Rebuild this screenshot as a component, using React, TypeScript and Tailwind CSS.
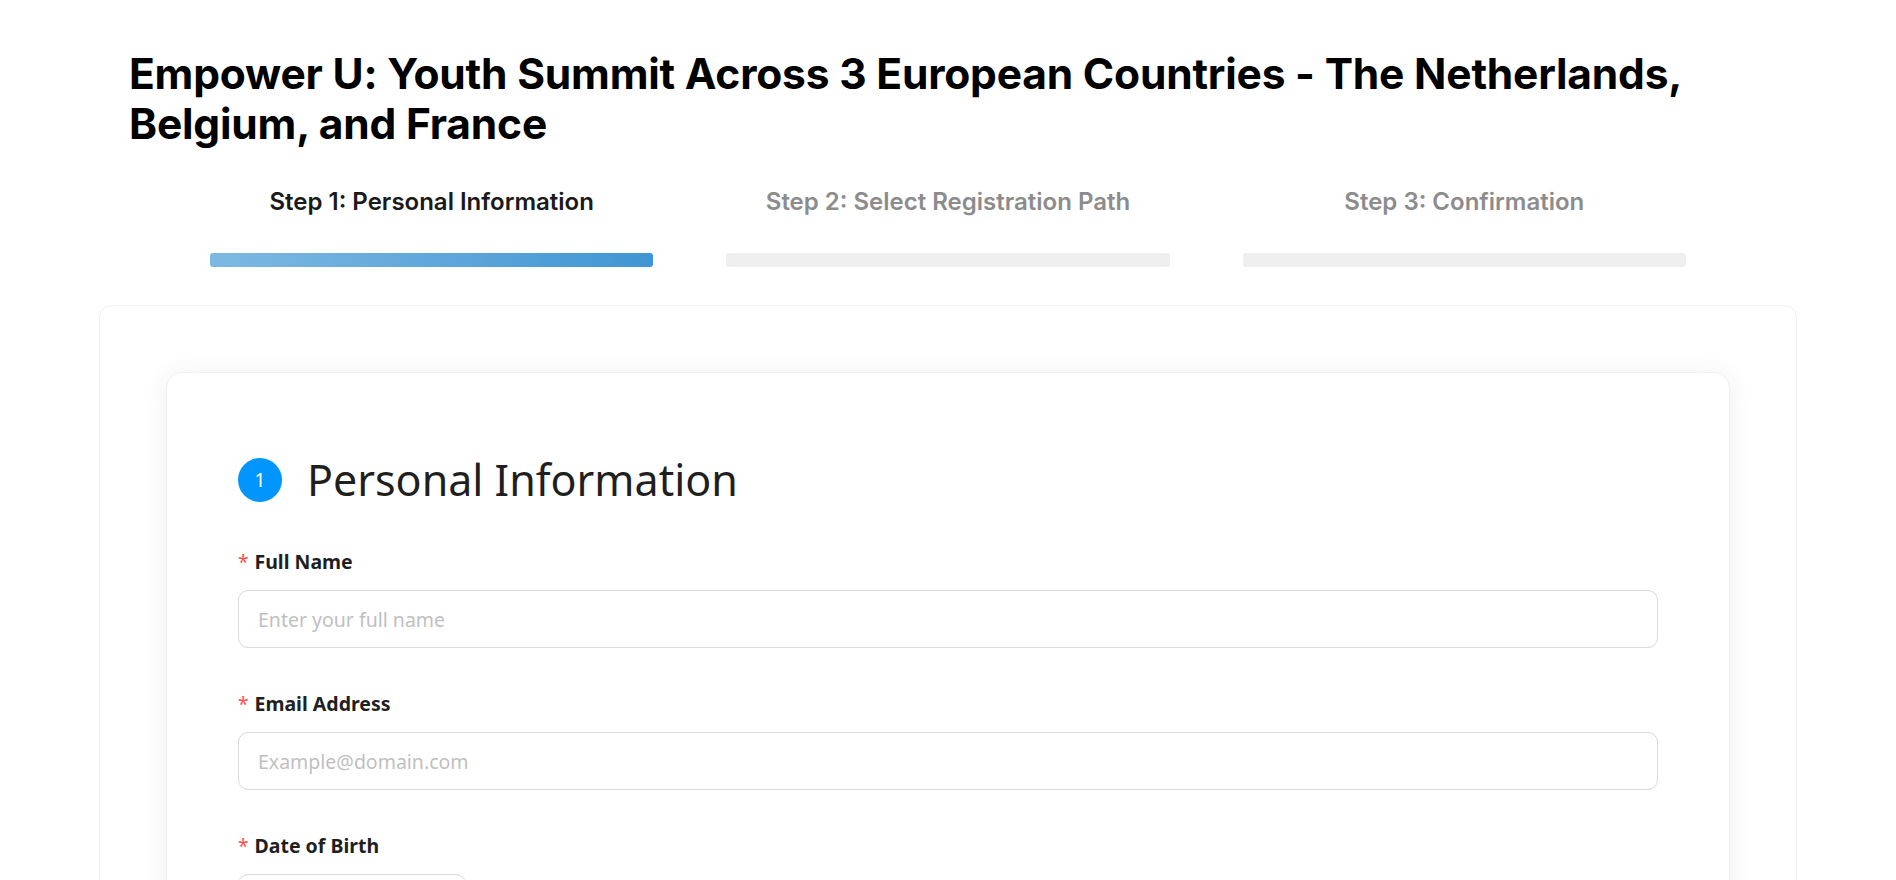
import React from 'react'

const steps = [
  { label: 'Step 1: Personal Information', active: true },
  { label: 'Step 2: Select Registration Path', active: false },
  { label: 'Step 3: Confirmation', active: false },
]

const Field = ({ label, placeholder, narrow }: { label: string; placeholder: string; narrow?: boolean }) => (
  <div className="flex flex-col">
    <label className="flex items-center h-[28px] text-[19.5px] font-bold text-[#1f1f1f]">
      <span className="text-[#ff4d4f] mr-[6px] text-[19px] font-normal">*</span>
      {label}
    </label>
    <input
      placeholder={placeholder}
      className={`mt-[14px] h-[58px] rounded-[10px] border border-[#d9d9d9] px-[19px] text-[19.5px] text-[#1f1f1f] placeholder:text-[#bfbfbf] outline-none ${narrow ? 'w-[228px]' : 'w-full'}`}
    />
  </div>
)

const App = () => {
  return (
    <div className="min-h-screen bg-white font-['Noto_Sans',sans-serif]">
      <div className="mx-auto w-[1698px] pt-[49px]">
        <h1 className="px-[30px] text-[42.5px] leading-[50px] font-bold text-black font-['Inter',sans-serif] tracking-[-0.2px]">
          Empower U: Youth Summit Across 3 European Countries - The Netherlands, Belgium, and France
        </h1>

        <div className="mx-auto mt-[39px] flex w-[1476px] gap-[73px] font-['Inter',sans-serif]">
          {steps.map((s) => (
            <div key={s.label} className="flex flex-1 flex-col items-center">
              <div className={`h-[28px] text-[24px] leading-[28px] font-semibold ${s.active ? 'text-[#1a1a1a]' : 'text-[#8c8c8c]'}`}>
                {s.label}
              </div>
              <div
                className={`mt-[37px] h-[14px] w-full rounded-[3px] ${s.active ? 'bg-gradient-to-r from-[#7db9e2] to-[#3e96d3]' : 'bg-[#efefef]'}`}
              />
            </div>
          ))}
        </div>

        <div className="mt-[38px] rounded-[12px] border border-[#f0f0f0] p-[66px]">
          <div className="rounded-[16px] border border-[#f0f0f0] bg-white px-[71px] pt-[85px] pb-[72px] shadow-[0_2px_24px_rgba(0,0,0,0.07)]">
            <div className="flex items-center h-[44px]">
              <div className="flex h-[44px] w-[44px] items-center justify-center rounded-full bg-[#0095ff] text-[19px] text-white">
                1
              </div>
              <h2 className="ml-[25px] text-[43px] leading-[44px] text-[#1f1f1f]">Personal Information</h2>
            </div>

            <div className="mt-[46px] flex flex-col gap-[42px]">
              <Field label="Full Name" placeholder="Enter your full name" />
              <Field label="Email Address" placeholder="Example@domain.com" />
              <Field label="Date of Birth" placeholder="Select date" narrow />
              <Field label="Phone Number" placeholder="Enter your phone number" />
            </div>
          </div>
        </div>
      </div>
    </div>
  )
}

export default App
